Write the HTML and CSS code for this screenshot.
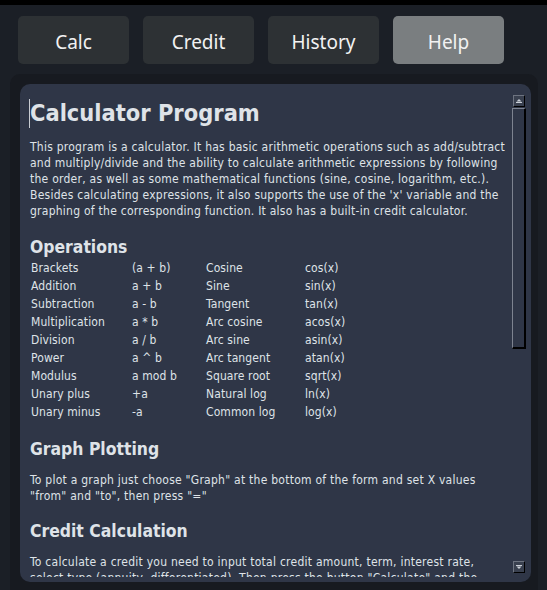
FILE: index.html
```html
<!DOCTYPE html>
<html>
<head>
<meta charset="utf-8">
<link rel="stylesheet" href="styles.css">
</head>
<body>
<div class="topbar"></div>
<nav class="tabs">
  <button class="tab">Calc</button>
  <button class="tab">Credit</button>
  <button class="tab">History</button>
  <button class="tab active">Help</button>
</nav>
<div class="frame">
  <div class="panel">
    <div class="content">
      <h1><span class="caret"></span>Calculator Program</h1>
      <p class="intro">This program is a calculator. It has basic arithmetic operations such as add/subtract and multiply/divide and the ability to calculate arithmetic expressions by following the order, as well as some mathematical functions (sine, cosine, logarithm, etc.). Besides calculating expressions, it also supports the use of the 'x' variable and the graphing of the corresponding function. It also has a built-in credit calculator.</p>
      <h2>Operations</h2>
      <div class="ops">
        <span>Brackets</span><span>(a + b)</span><span>Cosine</span><span>cos(x)</span>
        <span>Addition</span><span>a + b</span><span>Sine</span><span>sin(x)</span>
        <span>Subtraction</span><span>a - b</span><span>Tangent</span><span>tan(x)</span>
        <span>Multiplication</span><span>a * b</span><span>Arc cosine</span><span>acos(x)</span>
        <span>Division</span><span>a / b</span><span>Arc sine</span><span>asin(x)</span>
        <span>Power</span><span>a ^ b</span><span>Arc tangent</span><span>atan(x)</span>
        <span>Modulus</span><span>a mod b</span><span>Square root</span><span>sqrt(x)</span>
        <span>Unary plus</span><span>+a</span><span>Natural log</span><span>ln(x)</span>
        <span>Unary minus</span><span>-a</span><span>Common log</span><span>log(x)</span>
      </div>
      <h2 class="after-table">Graph Plotting</h2>
      <p class="sec">To plot a graph just choose "Graph" at the bottom of the form and set X values "from" and "to", then press "="</p>
      <h2 class="after-p">Credit Calculation</h2>
      <p class="sec">To calculate a credit you need to input total credit amount, term, interest rate, select type (annuity, differentiated). Then press the button "Calculate" and the results will be shown below.</p>
    </div>
    <div class="scrollbar">
      <div class="sb-btn">
        <svg width="10" height="10" viewBox="0 0 10 10"><path d="M5 3 L7.5 5.5 L2.5 5.5 Z" fill="#c9ced6"/><rect x="2" y="6" width="6" height="1" fill="#c9ced6"/></svg>
      </div>
      <div class="sb-thumb"></div>
      <div class="sb-track"></div>
      <div class="sb-btn">
        <svg width="10" height="10" viewBox="0 0 10 10"><rect x="2" y="3" width="6" height="1" fill="#c9ced6"/><path d="M2.5 4.5 L7.5 4.5 L5 7 Z" fill="#c9ced6"/></svg>
      </div>
    </div>
  </div>
</div>
</body>
</html>
```
FILE: styles.css
```css
html, body {
  margin: 0;
  padding: 0;
  background: #1b1f26;
  overflow: hidden;
}
body {
  width: 547px;
  height: 590px;
  font-family: "DejaVu Sans Condensed", "DejaVu Sans", sans-serif;
  color: #dfe3e8;
}
.topbar {
  height: 5px;
  background: #000;
}
.tabs {
  display: flex;
  gap: 14px;
  padding: 11px 18px 0 18px;
}
.tab {
  width: 111px;
  height: 48px;
  border: none;
  border-radius: 5px;
  background: #2d3134;
  color: #f2f2f2;
  font-family: "Noto Sans", "Open Sans", sans-serif;
  font-size: 19px;
  padding: 3px 0 0 0;
}
.tab.active {
  background: #7a7e80;
}
.frame {
  margin: 10px 0 0 10px;
  width: 511px;
  height: 520px;
  padding: 10px 7px 0 10px;
  background: #171a20;
  border-radius: 10px 10px 0 0;
}
.panel {
  display: flex;
  height: 498px;
  background: #2f3647;
  border-radius: 10px;
}
.content {
  flex: 1;
  overflow: hidden;
  padding: 14px 3px 0 10px;
  margin-bottom: 5px;
}
h1 {
  margin: 0;
  font-size: 23.4px;
  line-height: 30px;
  font-weight: bold;
}
.caret {
  display: inline-block;
  width: 1px;
  height: 29px;
  background: #c8ccd2;
  vertical-align: -7px;
  margin-left: -1px;
  margin-right: 0;
}
p {
  margin: 0;
  font-size: 12px;
  line-height: 16px;
  letter-spacing: 0.25px;
}
.intro {
  margin-top: 11px;
}
h2 {
  margin: 17px 0 0 0;
  font-size: 17.4px;
  line-height: 22px;
  font-weight: bold;
}
h2.after-p {
  margin-top: 16px;
}
.sec {
  margin-top: 12px;
}
.ops {
  display: grid;
  grid-template-columns: 101px 74px 99px auto;
  margin: 1px 0 0 1px;
  font-size: 12px;
  line-height: 18px;
  letter-spacing: 0.1px;
}
.scrollbar {
  display: flex;
  flex-direction: column;
  width: 14px;
  margin: 11px 5px 9px 0;
}
.sb-btn {
  width: 10px;
  height: 10px;
  border-top: 1px solid #6d7380;
  border-left: 1px solid #6d7380;
  border-right: 1px solid #000;
  border-bottom: 1px solid #000;
  background: #39404f;
  display: flex;
  align-items: center;
  justify-content: center;
  margin-left: 1px;
}
.sb-btn svg {
  display: block;
}
.sb-thumb {
  height: 238px;
  margin-top: 1px;
  border-top: 1px solid #7d8390;
  border-left: 1px solid #7d8390;
  border-right: 2px solid #000;
  border-bottom: 2px solid #000;
  background: #2f3647;
  width: 11px;
}
.sb-track {
  flex: 1;
}
```
